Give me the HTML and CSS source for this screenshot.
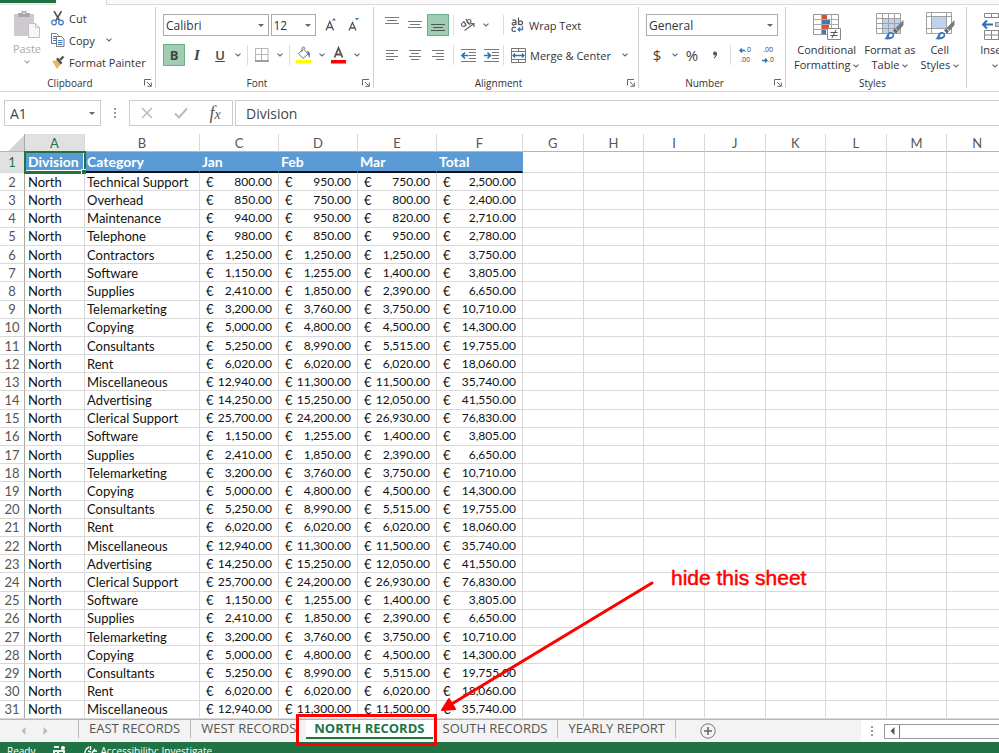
FILE: index.html
```html
<!DOCTYPE html>
<html lang="en">
<head>
    <meta charset="UTF-8">
    <meta name="viewport" content="width=device-width, initial-scale=1.0">
    <title>Division Records</title>
    <link rel="stylesheet" href="styles.css">
</head>
<body>
    <svg class="defs" aria-hidden="true">
        <symbol id="chev" viewBox="0 0 6 4"><path d="M.5.6 3 3 5.500.6" fill="none" stroke="#666" stroke-width="1.100"/></symbol>
        <symbol id="launch" viewBox="0 0 8 8"><path d="M.5 6.500V.5h6.500M3 3l4 4M7.300 3.500v3.800H3.500" fill="none" stroke="#666"/></symbol>
        <symbol id="brush" viewBox="0 0 20 20"><path d="M19.500 0v5l-5 6-3-3z" fill="#7a7a7a"/><path d="M11 8.500l3 3-2 2-3-3z" fill="#666"/><path d="M0 19c3-.5 2-6 6-7 3-.5 5 2 4 4.500C9 19.500 4 20 0 19z" fill="#3d7ab8"/><path d="M5.500 14.500c1.500-1.500 3-.5 3 .8-.5 1.500-2 1.700-3.500 1.700z" fill="#fff"/></symbol>
    </svg>
    <div class="app">
        <div class="tab-strip"><div class="file-tab"></div><div class="home-tab"></div><div class="tab-rest"></div></div>
        <div class="ribbon">
            <section class="group clipboard">
                <div class="group-body">
                    <button class="big-btn paste">
                        <svg width="28" height="29" viewBox="0 0 28 29"><path d="M1 4h20v22H1z" fill="#cdc9cd"/><path d="M5 3h3c0-3 6-3 6 0h3v4H5z" fill="#a9a6a9"/><path d="M9.500 3h3" stroke="#fff"/><path d="M15.500 13.500h7l4 4v10h-11z" fill="#f8f4fa" stroke="#c5bfc8"/><path d="M22.500 13.500v4h4" fill="none" stroke="#c5bfc8"/></svg>
                        <span>Paste</span>
                        <svg class="chev"><use href="#chev"/></svg>
                    </button>
                    <div class="clip-list">
                        <button class="text-btn">
                            <svg width="14" height="15" viewBox="0 0 14 15"><path d="M3 0l5.500 9.500M10.500 0L5 9.500" stroke="#555" stroke-width="1.600"/><circle cx="3" cy="11.500" r="2.300" fill="none" stroke="#3d7ab8" stroke-width="1.200"/><circle cx="10" cy="11.500" r="2.300" fill="none" stroke="#3d7ab8" stroke-width="1.200"/></svg>
                            Cut
                        </button>
                        <button class="text-btn">
                            <svg width="14" height="15" viewBox="0 0 14 15"><path d="M.5.5h5l2 2v8h-7z" fill="#fff" stroke="#777"/><path d="M2 3.500h3M2 5.500h3M2 7.500h3" stroke="#3d7ab8"/><path d="M5.500 3.500h5l2.500 2.500v7.500H5.500z" fill="#fff" stroke="#777"/><path d="M7 7.500h4.500M7 9.500h4.500M7 11.500h4.500" stroke="#3d7ab8"/></svg>
                            Copy
                            <svg class="chev"><use href="#chev"/></svg>
                        </button>
                        <button class="text-btn">
                            <svg width="14" height="15" viewBox="0 0 14 15"><path d="M1 6l6-1 3 4-4 5z" fill="#e6b96b"/><path d="M5 4l2-1.500L11.500 8 9.500 9.500z" fill="#555"/><path d="M9 5l3.500-3.500" stroke="#555" stroke-width="2.400"/></svg>
                            Format Painter
                        </button>
                    </div>
                </div>
                <footer><h2>Clipboard</h2><button class="launcher" aria-label="Clipboard settings"><svg><use href="#launch"/></svg></button></footer>
            </section>

            <section class="group font">
                <div class="group-body rows">
                    <div class="tool-row">
                        <div class="pick pick-font"><select aria-label="Font"><option>Calibri</option></select></div>
                        <div class="pick pick-size"><select aria-label="Font size"><option>12</option></select></div>
                        <button class="icon-btn" aria-label="Increase font size"><svg width="14" height="16" viewBox="0 0 14 16"><path d="M2 13.500L5.800 4.500 9.600 13.500M3.300 10.500h5" fill="none" stroke="#555" stroke-width="1.300"/><path d="M8 3.500l2-2.500 2 2.500z" fill="#3d7ab8"/></svg></button>
                        <button class="icon-btn" aria-label="Decrease font size"><svg width="14" height="16" viewBox="0 0 14 16"><path d="M2 13.500L5.500 5.500 9 13.500M3.300 11h4.500" fill="none" stroke="#555" stroke-width="1.300"/><path d="M8 1l2 2.500L12 1z" fill="#3d7ab8"/></svg></button>
                    </div>
                    <div class="tool-row">
                        <button class="icon-btn active"><b>B</b></button>
                        <button class="icon-btn"><i>I</i></button>
                        <button class="icon-btn"><u>U</u></button>
                        <button class="drop" aria-label="Underline options"><svg class="chev"><use href="#chev"/></svg></button>
                        <span class="sep"></span>
                        <button class="icon-btn" aria-label="Borders"><svg width="14" height="14" viewBox="0 0 14 14"><path d="M.5.500h12.500v12.500H.5zM6.500 0v13M0 6.500h13" fill="none" stroke="#b5b5b5"/><path d="M0 13h14" stroke="#666"/></svg></button>
                        <button class="drop" aria-label="Border options"><svg class="chev"><use href="#chev"/></svg></button>
                        <span class="sep"></span>
                        <button class="icon-btn" aria-label="Fill color"><svg width="16" height="18" viewBox="0 0 16 18"><path d="M0 14h15v3.500H0z" fill="#ff0"/><path d="M2.500 7.500L7.500 3l4.500 5-5 4.500z" fill="#fff" stroke="#777"/><path d="M6 6V2.500C6 .5 9 .5 9 3" fill="none" stroke="#777"/><path d="M11 5c3 0 3.500 3 2.500 7-1-1-1-3-1.500-4z" fill="#3d7ab8"/></svg></button>
                        <button class="drop" aria-label="Fill color options"><svg class="chev"><use href="#chev"/></svg></button>
                        <button class="icon-btn" aria-label="Font color"><svg width="16" height="18" viewBox="0 0 16 18"><path d="M0 14h15v3.500H0z" fill="red"/><path d="M3.500 11.500L7.500 2l4 9.500M5 8.500h5" fill="none" stroke="#555" stroke-width="1.800"/></svg></button>
                        <button class="drop" aria-label="Font color options"><svg class="chev"><use href="#chev"/></svg></button>
                    </div>
                </div>
                <footer><h2>Font</h2><button class="launcher" aria-label="Font settings"><svg><use href="#launch"/></svg></button></footer>
            </section>

            <section class="group alignment">
                <div class="group-body rows">
                    <div class="tool-row">
                        <button class="icon-btn" aria-label="Top align"><svg width="14" height="16" viewBox="0 0 14 16"><path d="M0 .5h14M2 3.500h10M0 6.500h14" stroke="#777"/></svg></button>
                        <button class="icon-btn" aria-label="Middle align"><svg width="14" height="16" viewBox="0 0 14 16"><path d="M0 4.500h14M2 7.500h10M0 10.500h14" stroke="#777"/></svg></button>
                        <button class="icon-btn active" aria-label="Bottom align"><svg width="14" height="16" viewBox="0 0 14 16"><path d="M0 7.500h14M2 10.500h10M0 13.500h14" stroke="#555"/></svg></button>
                        <span class="sep"></span>
                        <button class="icon-btn" aria-label="Orientation"><svg width="16" height="16" viewBox="0 0 16 16"><g fill="none" stroke="#666" stroke-width="1.200"><circle cx="3.500" cy="7.500" r="2"/><path d="M3.500 4l3 4.500M6 2l4 6"/><circle cx="9" cy="4.500" r="2"/><path d="M4.500 13.500L14 6.500M10.500 6.500H14V10"/></g></svg></button>
                        <button class="drop" aria-label="Orientation options"><svg class="chev"><use href="#chev"/></svg></button>
                        <span class="sep push"></span>
                        <button class="text-btn">
                            <svg width="14" height="16" viewBox="0 0 14 16"><g fill="none" stroke="#555" stroke-width="1.200"><path d="M1.500 3.500c1.500-1 3.500-.5 3.500 1V8M5 5.500C2 5.300 1 6 1.200 7c.5 1.300 3 1 3.800-.5M7.500.5V8"/><circle cx="9.500" cy="5.800" r="2"/><path d="M5 10.500c-3-1-4 .3-4 2s1.500 2.500 4 1.500"/></g><path d="M11.500 9v3.500H7M9 10.500l-2 2 2 2" fill="none" stroke="#3d7ab8" stroke-width="1.300"/></svg>
                            Wrap Text
                        </button>
                    </div>
                    <div class="tool-row">
                        <button class="icon-btn" aria-label="Align left"><svg width="12" height="10" viewBox="0 0 12 10"><path d="M0 .5h12M0 3.500h8M0 6.500h12M0 9.500h8" stroke="#777"/></svg></button>
                        <button class="icon-btn" aria-label="Center"><svg width="12" height="10" viewBox="0 0 12 10"><path d="M0 .5h12M2 3.500h8M0 6.500h12M2 9.500h8" stroke="#777"/></svg></button>
                        <button class="icon-btn" aria-label="Align right"><svg width="12" height="10" viewBox="0 0 12 10"><path d="M0 .5h12M4 3.500h8M0 6.500h12M4 9.500h8" stroke="#777"/></svg></button>
                        <span class="sep"></span>
                        <button class="icon-btn" aria-label="Decrease indent"><svg width="15" height="13" viewBox="0 0 15 13"><path d="M0 .5h15M8 3.500h7M8 6.500h7M8 9.500h7M0 12.500h15" stroke="#777"/><path d="M7.500 6.500H1M4 3.500l-3 3 3 3" fill="none" stroke="#2f6fb3" stroke-width="1.700"/></svg></button>
                        <button class="icon-btn" aria-label="Increase indent"><svg width="15" height="13" viewBox="0 0 15 13"><path d="M0 .5h15M8 3.500h7M8 6.500h7M8 9.500h7M0 12.500h15" stroke="#777"/><path d="M0 6.500h6.500M3.500 3.500l3 3-3 3" fill="none" stroke="#2f6fb3" stroke-width="1.700"/></svg></button>
                        <span class="sep push"></span>
                        <button class="text-btn">
                            <svg width="15" height="15" viewBox="0 0 15 15"><path d="M.5.500h14v14H.5zM.5 3.500h14M.5 11.500h14M7.500.5v3M7.500 11.500v3" fill="none" stroke="#777"/><path d="M2 7.500h11M4 5.500l-2 2 2 2M11 5.500l2 2-2 2" fill="none" stroke="#2f6fb3" stroke-width="1.300"/></svg>
                            Merge &amp; Center
                            <svg class="chev"><use href="#chev"/></svg>
                        </button>
                    </div>
                </div>
                <footer><h2>Alignment</h2><button class="launcher" aria-label="Alignment settings"><svg><use href="#launch"/></svg></button></footer>
            </section>

            <section class="group number">
                <div class="group-body rows">
                    <div class="tool-row">
                        <div class="pick pick-format"><select aria-label="Number format"><option>General</option></select></div>
                    </div>
                    <div class="tool-row">
                        <button class="icon-btn symbol">$</button>
                        <button class="drop" aria-label="Currency options"><svg class="chev"><use href="#chev"/></svg></button>
                        <button class="icon-btn symbol">%</button>
                        <button class="icon-btn" aria-label="Comma style"><svg width="6" height="8" viewBox="0 0 6 8"><circle cx="3" cy="2.500" r="2" fill="#555"/><path d="M4.500 2.500c0 2-1 3.500-2.500 4.500" fill="none" stroke="#555" stroke-width="1.200"/></svg></button>
                        <span class="sep"></span>
                        <button class="icon-btn decimals" aria-label="Increase decimal"><span><svg width="6" height="5" viewBox="0 0 6 5"><path d="M6 2.500H1M3 .5l-2 2 2 2" fill="none" stroke="#2f6fb3" stroke-width="1.300"/></svg>.0</span><span>.00</span></button>
                        <button class="icon-btn decimals" aria-label="Decrease decimal"><span>.00</span><span><svg width="6" height="5" viewBox="0 0 6 5"><path d="M0 2.500h5M3 .5l2 2-2 2" fill="none" stroke="#2f6fb3" stroke-width="1.300"/></svg>.0</span></button>
                    </div>
                </div>
                <footer><h2>Number</h2><button class="launcher" aria-label="Number settings"><svg><use href="#launch"/></svg></button></footer>
            </section>

            <section class="group style-group">
                <div class="group-body">
                    <button class="big-btn">
                        <svg width="30" height="29" viewBox="0 0 30 29"><path d="M1.500 2.500h25v20h-25z" fill="#fff" stroke="#999"/><path d="M1.500 7.500h25M1.500 12.500h25M1.500 17.500h25M9.500 2.500v20M19.500 2.500v20" stroke="#aaa"/><path d="M10 3h5v4h-5zM10 13h7v4h-7z" fill="#d9532f"/><path d="M10 8h8v4h-8zM10 18h4v4h-4z" fill="#3d7ab8"/><path d="M15.500 16.500h13v11h-13z" fill="#fff" stroke="#888"/><path d="M18.500 20.500h7M18.500 23.500h7M24 18l-4 8" stroke="#555"/></svg>
                        <span>Conditional<br>Formatting <svg class="chev"><use href="#chev"/></svg></span>
                    </button>
                    <button class="big-btn">
                        <svg width="30" height="29" viewBox="0 0 30 29"><path d="M1.500 1.500h24v20h-24z" fill="#fff"/><path d="M8 7h18v15H8z" fill="#bdd3ea"/><path d="M1.500 1.500h24v20h-24zM1.500 6.500h24M1.500 11.500h24M1.500 16.500h24M7.500 1.500v20M13.500 1.500v20M19.500 1.500v20" fill="none" stroke="#a0a0a0"/><use href="#brush" x="9" y="8" width="20" height="20"/></svg>
                        <span>Format as<br>Table <svg class="chev"><use href="#chev"/></svg></span>
                    </button>
                    <button class="big-btn">
                        <svg width="30" height="29" viewBox="0 0 30 29"><path d="M1.500.500h25v21h-25z" fill="#fff"/><path d="M7 5h14v11H7z" fill="#bdd3ea"/><path d="M1.500.500h25v21h-25zM1.500 4.500h25M1.500 16.500h25M6.500.5v21M21.500.5v21" fill="none" stroke="#a0a0a0"/><use href="#brush" x="10" y="8" width="20" height="20"/></svg>
                        <span>Cell<br>Styles <svg class="chev"><use href="#chev"/></svg></span>
                    </button>
                </div>
                <footer><h2>Styles</h2></footer>
            </section>

            <section class="group cells">
                <div class="group-body">
                    <button class="big-btn">
                        <svg width="30" height="29" viewBox="0 0 30 29"><path d="M4.500 1.500h21v4h-21zM11.500 1.500v4M18.500 1.500v4M4.500 18.500h21v9h-21zM11.500 18.500v9M18.500 18.500v9M4.500 23h21" fill="none" stroke="#888"/><path d="M15.500 10.500h12v4h-12z" fill="#bdd3ea" stroke="#888"/><path d="M13 12.500H3M7 8.500l-4 4 4 4" fill="none" stroke="#2f6fb3" stroke-width="2"/></svg>
                        <span>Insert<br><svg class="chev"><use href="#chev"/></svg></span>
                    </button>
                </div>
            </section>
        </div>

        <div class="formula-bar">
            <div class="name-box pick"><input aria-label="Name box" value="A1"></div>
            <svg class="dots" width="3" height="11" viewBox="0 0 3 11"><path d="M0 0h2v2H0zM0 4h2v2H0zM0 8h2v2H0z" fill="#999"/></svg>
            <div class="formula-actions">
                <button aria-label="Cancel"><svg width="12" height="12" viewBox="0 0 12 12"><path d="M1 1l10 10M11 1L1 11" stroke="#bbb" stroke-width="1.500"/></svg></button>
                <button aria-label="Enter"><svg width="14" height="12" viewBox="0 0 14 12"><path d="M1 6.500l4 4L13 1.500" fill="none" stroke="#bbb" stroke-width="2"/></svg></button>
                <button class="fx" aria-label="Insert function">f<small>x</small></button>
            </div>
            <input class="formula-input" aria-label="Formula bar" value="Division">
        </div>

        <div class="sheet">
            <table>
                <colgroup>
                    <col class="col-index"><col class="col-division"><col class="col-category">
                    <col class="col-month"><col class="col-month"><col class="col-month"><col class="col-total">
                    <col><col><col><col><col><col><col><col>
                </colgroup>
                <thead>
                    <tr><th class="corner"></th><th class="selected">A</th><th>B</th><th>C</th><th>D</th><th>E</th><th>F</th><th>G</th><th>H</th><th>I</th><th>J</th><th>K</th><th>L</th><th>M</th><th>N</th></tr>
                </thead>
                <tbody id="rows">
                    <tr class="titles"><th class="selected">1</th><td class="current">Division</td><td>Category</td><td>Jan</td><td>Feb</td><td>Mar</td><td>Total</td><td></td><td></td><td></td><td></td><td></td><td></td><td></td><td></td></tr>
                </tbody>
            </table>
        </div>

        <div class="sheet-bar">
            <button class="nav-btn" aria-label="Previous sheet"><svg width="5" height="8" viewBox="0 0 5 8"><path d="M4.500 0v8L.5 4z" fill="#bbb"/></svg></button>
            <button class="nav-btn" aria-label="Next sheet"><svg width="5" height="8" viewBox="0 0 5 8"><path d="M.5 0v8l4-4z" fill="#bbb"/></svg></button>
            <nav class="sheet-tabs">
                <button>EAST RECORDS</button>
                <button>WEST RECORDS</button>
                <button class="current-tab">NORTH RECORDS</button>
                <button>SOUTH RECORDS</button>
                <button>YEARLY REPORT</button>
            </nav>
            <button class="add-btn" aria-label="New sheet"><svg width="16" height="16" viewBox="0 0 16 16"><circle cx="8" cy="8" r="7.200" fill="none" stroke="#777"/><path d="M8 4v8M4 8h8" stroke="#666" stroke-width="1.500"/></svg></button>
            <div class="scroll-area">
                <svg class="dots" width="3" height="11" viewBox="0 0 3 11"><path d="M0 0h2v2H0zM0 4h2v2H0zM0 8h2v2H0z" fill="#999"/></svg>
                <div class="scrollbar"><button aria-label="Scroll left"><svg width="5" height="8" viewBox="0 0 5 8"><path d="M4.500 0v8L.5 4z" fill="#555"/></svg></button><div class="thumb"></div></div>
            </div>
        </div>

        <div class="status-bar">
            <span>Ready</span>
            <svg width="13" height="12" viewBox="0 0 13 12"><path d="M1 0h5v2H1zM0 4h12v8H0z" fill="#e8f2ec"/><circle cx="10" cy="2" r="2" fill="#fff"/><path d="M2 6.500h2M6 6.500h4" stroke="#217346"/></svg>
            <span class="access"><svg width="14" height="12" viewBox="0 0 14 12"><path d="M5 1C1 3 0 7 2 11M6.500 0v4M9 5h4M4 5l3 1M8 7l3-4M8 8l4 3" fill="none" stroke="#fff" stroke-width="1.400"/></svg> Accessibility: Investigate</span>
        </div>

        <div class="note">
            <svg width="220" height="140" viewBox="0 0 220 140"><path d="M215 5L8 130" stroke="red" stroke-width="3" stroke-linecap="round"/><path d="M12 121L5 132l13-1z" fill="red" stroke="red" stroke-width="2" stroke-linejoin="round"/></svg>
            <p>hide this sheet</p>
        </div>
    </div>
    <script src="script.js"></script>
</body>
</html>
```
FILE: styles.css
```css
* { margin: 0; padding: 0; box-sizing: border-box; }
body { font-family: "Open Sans", "Noto Sans", sans-serif; font-size: 12px; color: #333; background: #fff; overflow: hidden; }
button, input, select { font: inherit; color: inherit; background: none; border: none; outline: none; }
svg { display: block; flex: none; }
.defs { position: absolute; width: 0; height: 0; }
.app { position: relative; display: flex; flex-direction: column; height: 100vh; }

.tab-strip { display: flex; height: 5px; flex: none; }
.file-tab { width: 56px; background: #217346; border-bottom: 2px solid #ececec; }
.home-tab { width: 51px; border-right: 1px solid #d5d5d5; }
.tab-rest { flex: 1; background: #fafafa; border-bottom: 1px solid #d8d8d8; }

.ribbon { display: flex; flex: none; height: 87px; padding-top: 2px; border-bottom: 1px solid #d5d5d5; overflow: hidden; }
.group { display: flex; flex-direction: column; flex: none; margin-bottom: 3px; border-right: 1px solid #d0d0d0; }
.clipboard { width: 156px; }
.font { width: 218px; }
.alignment { width: 265px; }
.number { width: 147px; }
.style-group { width: 181px; }
.cells { border: none; padding-left: 13px; }
.group-body { display: flex; flex: 1; min-height: 0; }
.group footer { display: flex; align-items: center; flex: none; height: 10px; padding-right: 3px; }
.group h2 { flex: 1; font-size: 10px; font-weight: 400; line-height: 14px; text-align: center; padding-right: 4px; color: #333; }
.launcher svg { width: 8px; height: 8px; }
.chev { width: 6px; height: 4px; }

.rows { flex-direction: column; gap: 8px; padding: 7px 7px 0; }
.tool-row { display: flex; align-items: center; flex: none; height: 22px; }
.icon-btn { display: flex; align-items: center; justify-content: center; width: 22px; height: 22px; margin-right: 1px; flex: none; font-size: 13px; color: #444; }
.icon-btn i { font-family: "Liberation Serif", serif; font-size: 15px; font-weight: 700; }
.icon-btn u { font-weight: 600; }
.icon-btn.active { background: #9fcdb3; border: 1px solid #6fae8b; }
.icon-btn.symbol { font-size: 15px; }
.drop { display: flex; align-items: center; justify-content: center; width: 12px; height: 22px; flex: none; }
.sep { width: 1px; height: 20px; margin: 0 3px; background: #dcdcdc; flex: none; }
.alignment .push { margin-left: auto; margin-right: 7px; }
.alignment .push + .text-btn { width: 120px; }
.text-btn { display: flex; align-items: center; gap: 4px; font-size: 11px; white-space: nowrap; }
.text-btn .chev { margin-left: 7px; }
.icon-btn.decimals { flex-direction: column; font-size: 7px; line-height: 10px; }
.decimals span { display: flex; align-items: center; }

.pick { position: relative; }
.pick::after { content: ""; position: absolute; right: 5px; top: 50%; margin-top: -1px; border: 3px solid transparent; border-top-color: #666; border-bottom: none; pointer-events: none; }
.pick select { width: 100%; height: 22px; padding-left: 2px; border: 1px solid #ababab; appearance: none; }
.pick-font { width: 109px; margin-right: 2px; }
.pick-size { width: 47px; margin-right: 4px; }
.pick-format { flex: 1; }

.big-btn { display: flex; flex-direction: column; align-items: center; font-size: 11px; line-height: 15px; white-space: nowrap; }
.big-btn > svg:first-child { margin-bottom: 1px; }
.big-btn span .chev { display: inline-block; vertical-align: middle; }
.paste { width: 51px; padding: 3px 0 0 3px; color: #aaa; }
.paste > svg:first-child { margin-bottom: 2px; }
.paste .chev { margin-top: 4px; opacity: 0.6; }
.clip-list { display: flex; flex-direction: column; }
.clip-list .text-btn { height: 22px; flex: none; }
.style-group .group-body { gap: 5px; padding: 5px 0 0 8px; }
.cells .group-body { padding-top: 5px; }

.formula-bar { display: flex; align-items: center; flex: none; height: 42px; padding-left: 4px; font-size: 14px; color: #444; }
.name-box { width: 97px; margin-right: 13px; }
.name-box::after { right: 6px; }
.name-box input { width: 100%; height: 26px; padding-left: 5px; border: 1px solid #ccc; }
.formula-actions { display: flex; width: 104px; height: 26px; margin: 0 2px 0 12px; border: 1px solid #ccc; }
.formula-actions button { display: flex; flex: 1; align-items: center; justify-content: center; }
.formula-actions .fx { font: italic 18px "Liberation Serif", serif; color: #555; }
.fx small { font-size: 14px; padding-top: 3px; }
.formula-input { flex: 1; min-width: 0; height: 26px; padding-left: 10px; border: 1px solid #ccc; border-right: none; }

.sheet { flex: 1; min-height: 0; overflow: hidden; font-family: Lato, "Open Sans", sans-serif; font-size: 13px; }
.sheet table { width: calc(100% + 9px); height: 100%; table-layout: fixed; border-spacing: 0; }
.col-index { width: 25px; }
.col-division { width: 60px; }
.col-category { width: 115px; }
.col-month { width: 79px; }
.col-total { width: 86px; }
.sheet th, .sheet td { height: 18px; border-right: 1px solid #d9d9d9; border-bottom: 1px solid #d9d9d9; line-height: 16px; white-space: nowrap; }
.sheet td { padding: 0 2px; color: #111; }
.sheet td:nth-child(2) { padding-left: 3px; }
.sheet th { font-weight: 400; color: #555; }
.sheet thead th { border-bottom-color: #b5b5b5; padding-top: 1px; }
.sheet tbody th { border-right-color: #aaa; }
.sheet .corner { background: linear-gradient(135deg, #fff 62%, #d5d5d5 62%); border-right-color: #aaa; }
.sheet th.selected { background: #e1e1e1; color: #217346; }
.sheet thead th.selected { border-bottom-color: #217346; }
.sheet .titles td, .sheet .titles th { height: 21px; }
.titles td { font-size: 14px; font-weight: 700; }
.sheet .titles td:nth-child(-n+7) { background: #5b9bd5; color: #fff; border-right-color: #5b9bd5; border-bottom: 2px solid #111; }
.sheet .titles td.current { position: relative; border-bottom-color: #217346; box-shadow: inset 0 0 0 1px #fff; outline: 2px solid #217346; outline-offset: -1px; }
.current::after { content: ""; position: absolute; right: -2px; bottom: -3px; width: 4px; height: 4px; background: #217346; border: 1px solid #fff; box-sizing: content-box; border-right: none; border-bottom: none; }
.money { display: flex; justify-content: space-between; padding: 0 4px; }
.money span:last-child { font-size: 12px; }

.sheet-bar { display: flex; flex: none; height: 23px; background: #f3f3f3; border-top: 1px solid #b5b5b5; font-size: 13px; color: #555; }
.nav-btn { display: flex; align-items: center; justify-content: center; width: 22px; }
.nav-btn:first-child { margin-left: 12px; }
.sheet-tabs { display: flex; margin-left: 22px; }
.sheet-tabs button { height: 18px; padding: 0 10px 3px; border-left: 1px solid #bbb; line-height: 14px; white-space: nowrap; }
.sheet-tabs button:last-child { border-right: 1px solid #bbb; }
.sheet-tabs .current-tab { position: relative; height: 19px; padding: 0 8px 2px; background: #fff; border-left: none; border-bottom: 2px solid #217346; color: #217346; font-weight: 700; }
.current-tab::after { content: ""; position: absolute; inset: -6px -4px -9px -10px; border: 3px solid red; }
.current-tab + button { border-left: none; }
.add-btn { margin-left: 24px; }
.scroll-area { display: flex; align-items: center; width: 138px; margin-left: auto; padding-left: 10px; background: #fff; }
.scrollbar { display: flex; flex: 1; height: 15px; margin-left: 10px; border: 1px solid #999; border-right: none; }
.scrollbar button { display: flex; align-items: center; justify-content: center; width: 14px; }
.thumb { flex: 1; border-left: 1px solid #777; }

.status-bar { display: flex; flex: none; height: 11px; gap: 18px; padding: 4px 0 0 7px; background: #217346; color: #fff; font-size: 10px; line-height: 11px; overflow: hidden; }
.access { display: flex; gap: 2px; }

.note { position: absolute; left: 437px; bottom: 35px; display: flex; color: red; }
.note p { margin: 0 0 0 14px; font: 21px "Liberation Sans", Arial, sans-serif; line-height: 0; -webkit-text-stroke: 0.5px red; }
```
FILE: script.js
```javascript
const records = [
    ['Technical Support', 800, 950, 750],
    ['Overhead', 850, 750, 800],
    ['Maintenance', 940, 950, 820],
    ['Telephone', 980, 850, 950],
    ['Contractors', 1250, 1250, 1250]
];

const repeated = [
    ['Software', 1150, 1255, 1400],
    ['Supplies', 2410, 1850, 2390],
    ['Telemarketing', 3200, 3760, 3750],
    ['Copying', 5000, 4800, 4500],
    ['Consultants', 5250, 8990, 5515],
    ['Rent', 6020, 6020, 6020],
    ['Miscellaneous', 12940, 11300, 11500],
    ['Advertising', 14250, 15250, 12050],
    ['Clerical Support', 25700, 24200, 26930]
];

function money(value) {
    const text = value.toLocaleString('en-US', { minimumFractionDigits: 2 });
    return `<td><div class="money"><span>€</span><span>${text}</span></div></td>`;
}

const all = [...records, ...repeated, ...repeated, ...repeated.slice(0, 7)];

document.getElementById('rows').insertAdjacentHTML('beforeend', all.map(([category, ...months], i) => {
    const total = months.reduce((sum, m) => sum + m, 0);
    return `<tr><th>${i + 2}</th><td>North</td><td>${category}</td>${[...months, total].map(money).join('')}${'<td></td>'.repeat(8)}</tr>`;
}).join(''));
```
